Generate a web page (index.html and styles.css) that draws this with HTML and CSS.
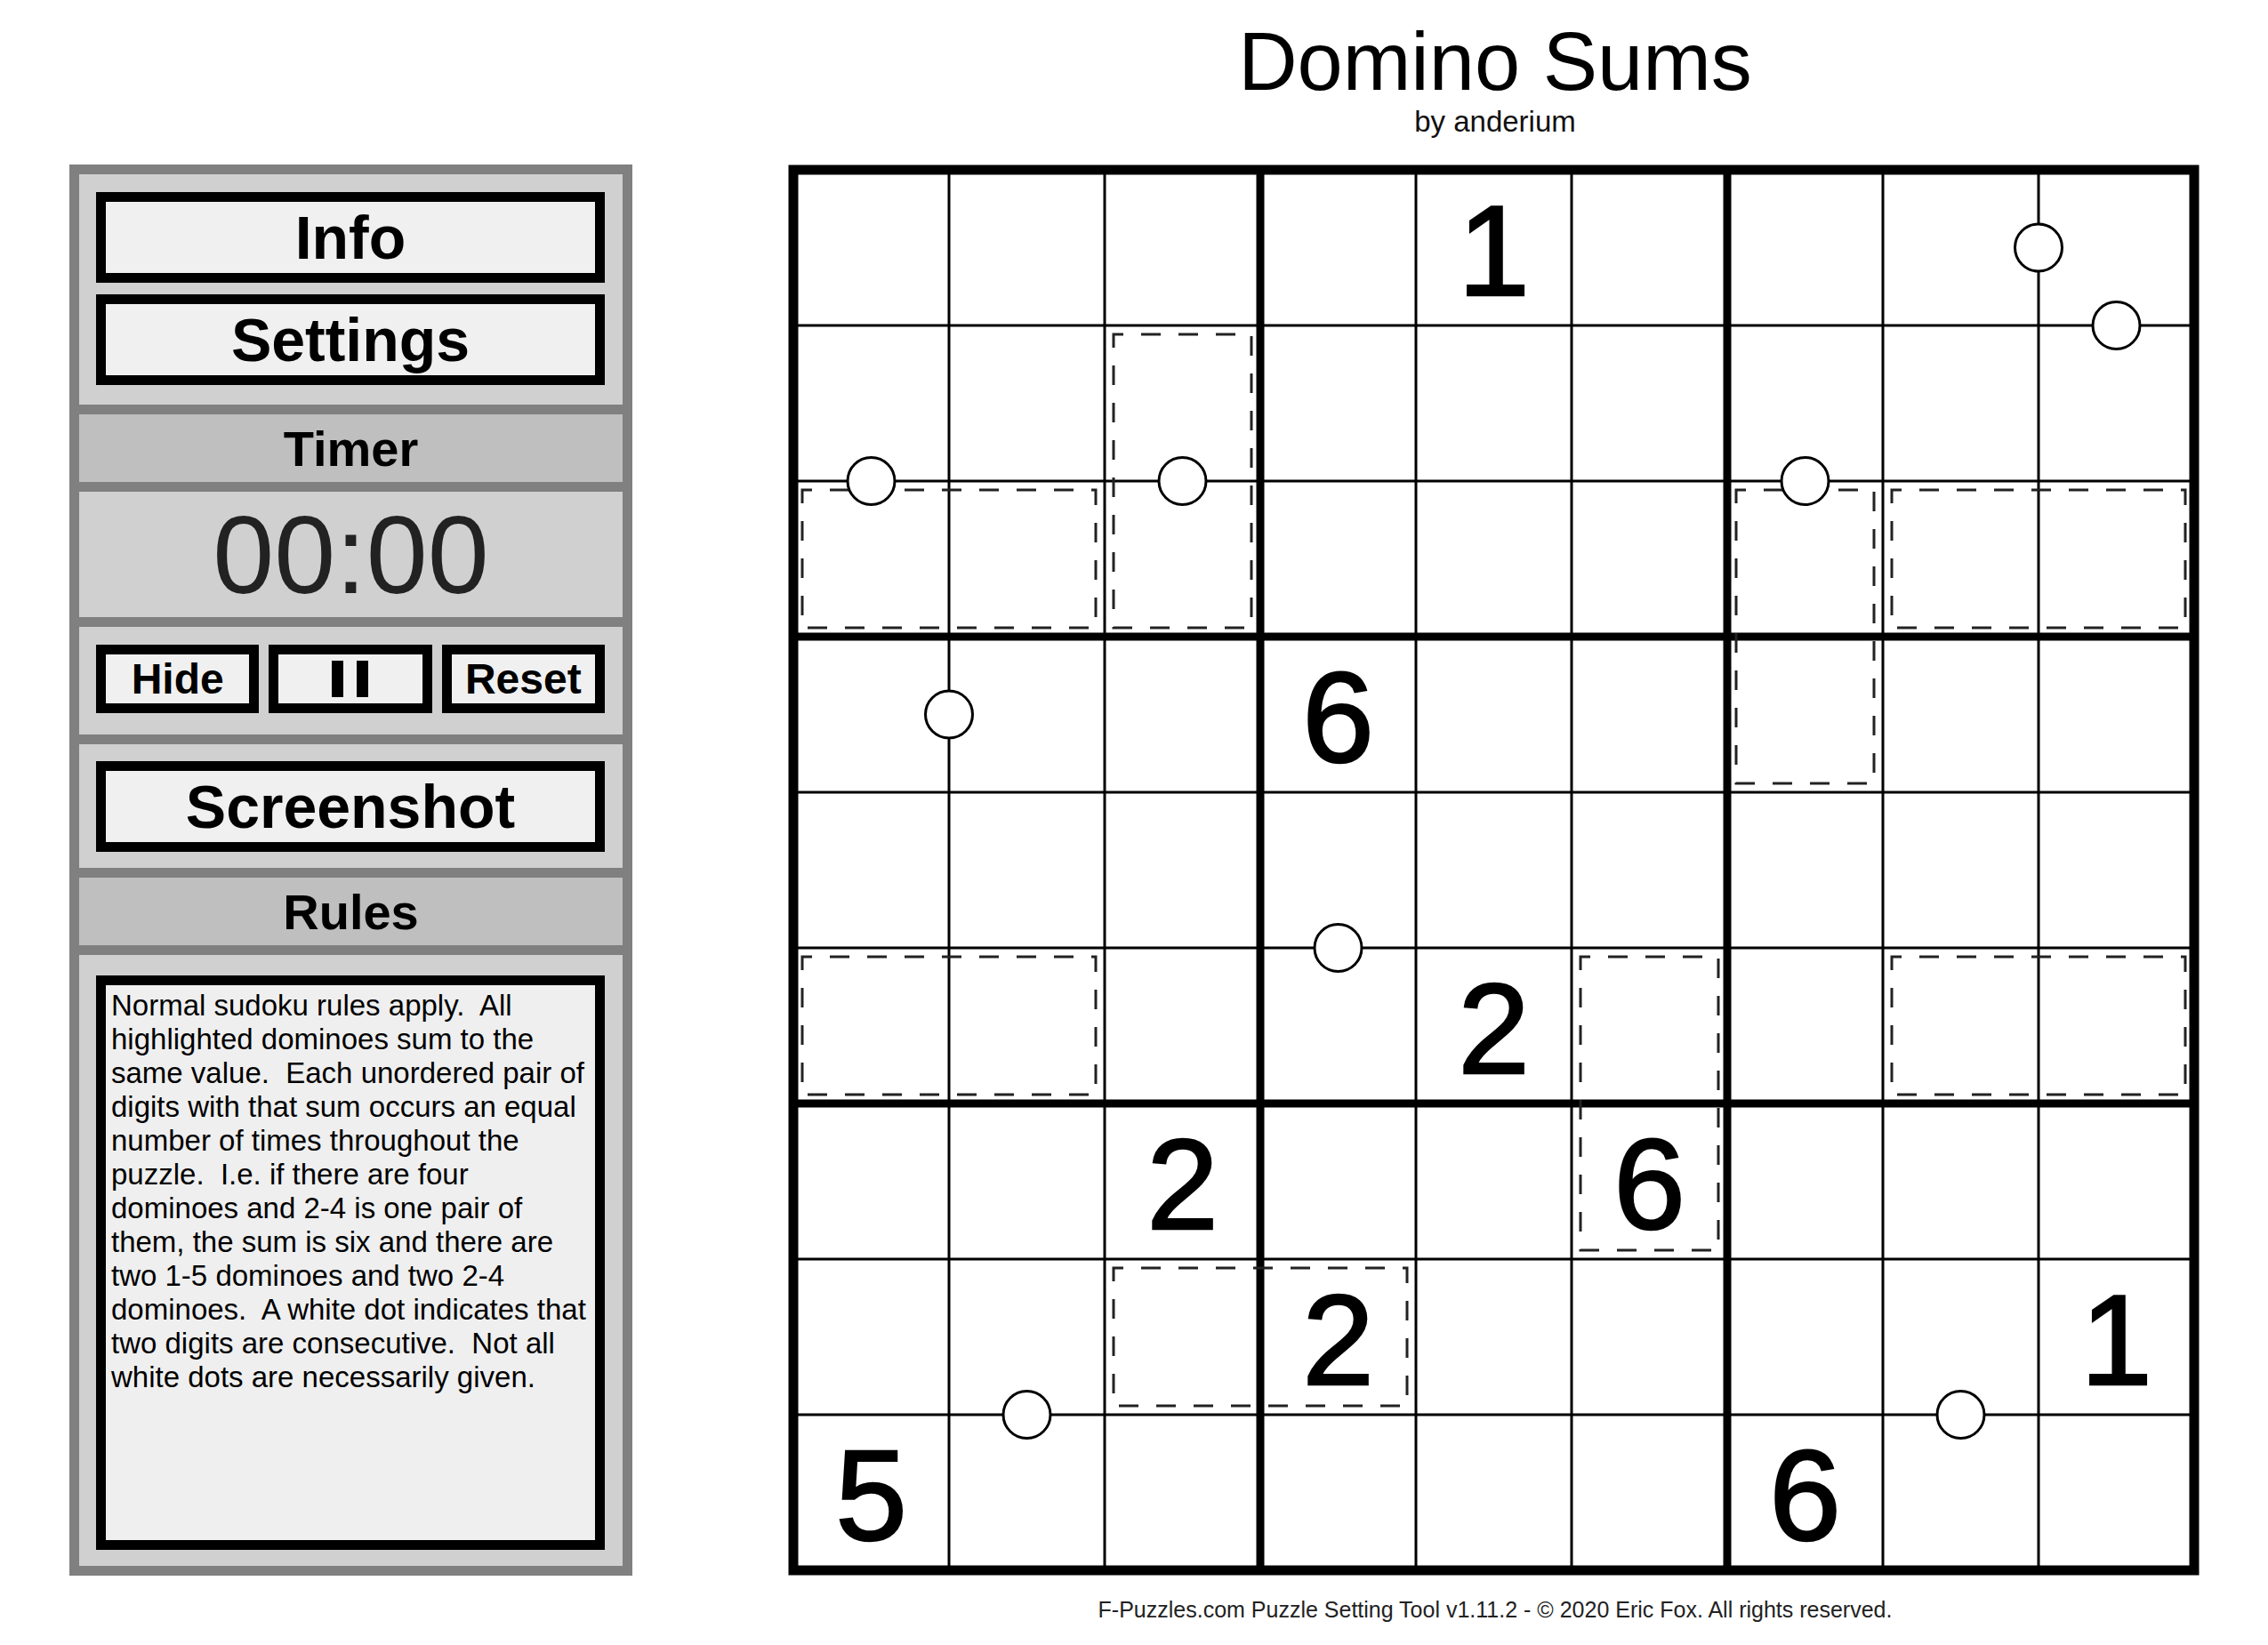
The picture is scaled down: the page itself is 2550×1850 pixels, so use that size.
FILE: index.html
```html
<!DOCTYPE html>
<html lang="en">
<head>
  <meta charset="UTF-8">
  <title>Domino Sums</title>
  <link rel="stylesheet" href="styles.css">
</head>
<body>
  <div class="page">
    <aside class="sidebar">
      <div class="section section-buttons">
        <div class="btn btn-large">Info</div>
        <div class="btn btn-large">Settings</div>
      </div>
      <div class="section section-header">Timer</div>
      <div class="section section-timer">00:00</div>
      <div class="section section-controls">
        <div class="btn btn-small">Hide</div>
        <div class="btn btn-small"><span class="pause-icon"></span></div>
        <div class="btn btn-small">Reset</div>
      </div>
      <div class="section section-screenshot">
        <div class="btn btn-large">Screenshot</div>
      </div>
      <div class="section section-header">Rules</div>
      <div class="section section-rules">
        <div class="rules-box">Normal sudoku rules apply.  All
highlighted dominoes sum to the
same value.  Each unordered pair of
digits with that sum occurs an equal
number of times throughout the
puzzle.  I.e. if there are four
dominoes and 2-4 is one pair of
them, the sum is six and there are
two 1-5 dominoes and two 2-4
dominoes.  A white dot indicates that
two digits are consecutive.  Not all
white dots are necessarily given.</div>
      </div>
    </aside>

    <main class="board">
      <header class="title-block">
        <h1 class="title">Domino Sums</h1>
        <div class="author">by anderium</div>
      </header>

      <svg class="grid" width="1600" height="1600" viewBox="0 0 1600 1600">
        <!-- thin cell lines -->
        <g class="line-thin">
          <line x1="186" y1="11" x2="186" y2="1586"/>
          <line x1="361" y1="11" x2="361" y2="1586"/>
          <line x1="711" y1="11" x2="711" y2="1586"/>
          <line x1="886" y1="11" x2="886" y2="1586"/>
          <line x1="1236" y1="11" x2="1236" y2="1586"/>
          <line x1="1411" y1="11" x2="1411" y2="1586"/>
          <line x1="11" y1="186" x2="1586" y2="186"/>
          <line x1="11" y1="361" x2="1586" y2="361"/>
          <line x1="11" y1="711" x2="1586" y2="711"/>
          <line x1="11" y1="886" x2="1586" y2="886"/>
          <line x1="11" y1="1236" x2="1586" y2="1236"/>
          <line x1="11" y1="1411" x2="1586" y2="1411"/>
        </g>
        <!-- box lines -->
        <g class="line-box">
          <line x1="536" y1="11" x2="536" y2="1586"/>
          <line x1="1061" y1="11" x2="1061" y2="1586"/>
          <line x1="11" y1="536" x2="1586" y2="536"/>
          <line x1="11" y1="1061" x2="1586" y2="1061"/>
        </g>
        <rect class="line-outer" x="11" y="11" width="1575" height="1575"/>

        <!-- dominoes -->
        <g class="cage">
          <rect x="21" y="371" width="330" height="155"/>
          <rect x="371" y="196" width="155" height="330"/>
          <rect x="1071" y="371" width="155" height="330"/>
          <rect x="1246" y="371" width="330" height="155"/>
          <rect x="21" y="896" width="330" height="155"/>
          <rect x="896" y="896" width="155" height="330"/>
          <rect x="1246" y="896" width="330" height="155"/>
          <rect x="371" y="1246" width="330" height="155"/>
        </g>

        <!-- white dots -->
        <g class="dot">
          <circle cx="1411" cy="98.5" r="26.5"/>
          <circle cx="1498.5" cy="186" r="26.5"/>
          <circle cx="98.5" cy="361" r="26.5"/>
          <circle cx="448.5" cy="361" r="26.5"/>
          <circle cx="1148.5" cy="361" r="26.5"/>
          <circle cx="186" cy="623.5" r="26.5"/>
          <circle cx="623.5" cy="886" r="26.5"/>
          <circle cx="273.5" cy="1411" r="26.5"/>
          <circle cx="1323.5" cy="1411" r="26.5"/>
        </g>

        <!-- givens -->
        <g class="digit">
          <text x="798.5" y="151.5">1</text>
          <text x="623.5" y="676.5">6</text>
          <text x="798.5" y="1026.5">2</text>
          <text x="448.5" y="1201.5">2</text>
          <text x="973.5" y="1201.5">6</text>
          <text x="623.5" y="1376.5">2</text>
          <text x="1498.5" y="1376.5">1</text>
          <text x="98.5" y="1551.5">5</text>
          <text x="1148.5" y="1551.5">6</text>
        </g>
      </svg>

      <footer class="credits">F-Puzzles.com Puzzle Setting Tool v1.11.2 - © 2020 Eric Fox. All rights reserved.</footer>
    </main>
  </div>
</body>
</html>
```

FILE: styles.css
```css
body {
  margin: 0;
  background: #ffffff;
  font-family: "Liberation Sans", Arial, sans-serif;
  color: #000;
}

.page {
  display: flex;
  align-items: flex-start;
  padding-left: 78px;
}

/* ---------- sidebar ---------- */

.sidebar {
  margin-top: 185px;
  width: 633px;
  height: 1587px;
  box-sizing: border-box;
  border: 11px solid #808080;
  background: #d0d0d0;
  display: flex;
  flex-direction: column;
}

.section + .section {
  border-top: 11px solid #808080;
}

.btn {
  box-sizing: border-box;
  border: 11px solid #000;
  background: #f0f0f0;
  display: flex;
  align-items: center;
  justify-content: center;
  font-weight: bold;
}

.btn-large {
  height: 102px;
  font-size: 68px;
}

.btn-small {
  flex: 1;
  height: 77px;
  font-size: 48px;
}

.section-buttons {
  padding: 20px 20px 22px 19px;
  display: flex;
  flex-direction: column;
  gap: 13px;
}

.section-header {
  height: 76px;
  background: #bfbfbf;
  display: flex;
  align-items: center;
  justify-content: center;
  font-weight: bold;
  font-size: 56px;
}

.section-timer {
  height: 141px;
  display: flex;
  align-items: center;
  justify-content: center;
  font-size: 124px;
  color: #222;
}

.section-controls {
  padding: 20px 20px 24px 19px;
  display: flex;
  gap: 11px;
}

.pause-icon {
  width: 41px;
  height: 41px;
  box-sizing: border-box;
  border-left: 13px solid #000;
  border-right: 13px solid #000;
}

.section-screenshot {
  padding: 19px 20px 18px 19px;
}

.section-rules {
  flex: 1;
  padding: 23px 20px 18px 19px;
  display: flex;
}

.rules-box {
  flex: 1;
  box-sizing: border-box;
  border: 11px solid #000;
  background: #efefef;
  padding: 4px 6px;
  font-size: 33px;
  line-height: 38px;
  white-space: pre;
  overflow: hidden;
}

/* ---------- board ---------- */

.board {
  margin-left: 170px;
  width: 1600px;
  display: flex;
  flex-direction: column;
  align-items: center;
}

.title-block {
  height: 180px;
  box-sizing: border-box;
  padding-top: 23px;
  text-align: center;
}

.title {
  margin: 0;
  font-size: 92px;
  line-height: 92px;
  font-weight: normal;
}

.author {
  margin-top: 5px;
  font-size: 33px;
  line-height: 33px;
  color: #111;
}

.grid {
  display: block;
}

.line-thin line {
  stroke: #000;
  stroke-width: 3;
}

.line-box line {
  stroke: #000;
  stroke-width: 9;
}

.line-outer {
  fill: none;
  stroke: #000;
  stroke-width: 11;
}

.cage rect {
  fill: none;
  stroke: #222;
  stroke-width: 3;
  stroke-dasharray: 22 20;
  stroke-dashoffset: 11;
}

.dot circle {
  fill: #fff;
  stroke: #000;
  stroke-width: 3;
}

.digit text {
  font-family: "Liberation Sans", Arial, sans-serif;
  font-size: 145px;
  text-anchor: middle;
  fill: #000;
  stroke: #000;
  stroke-width: 2.5;
}

.credits {
  margin-top: 16px;
  font-size: 25px;
  line-height: 28px;
  color: #222;
}
```
